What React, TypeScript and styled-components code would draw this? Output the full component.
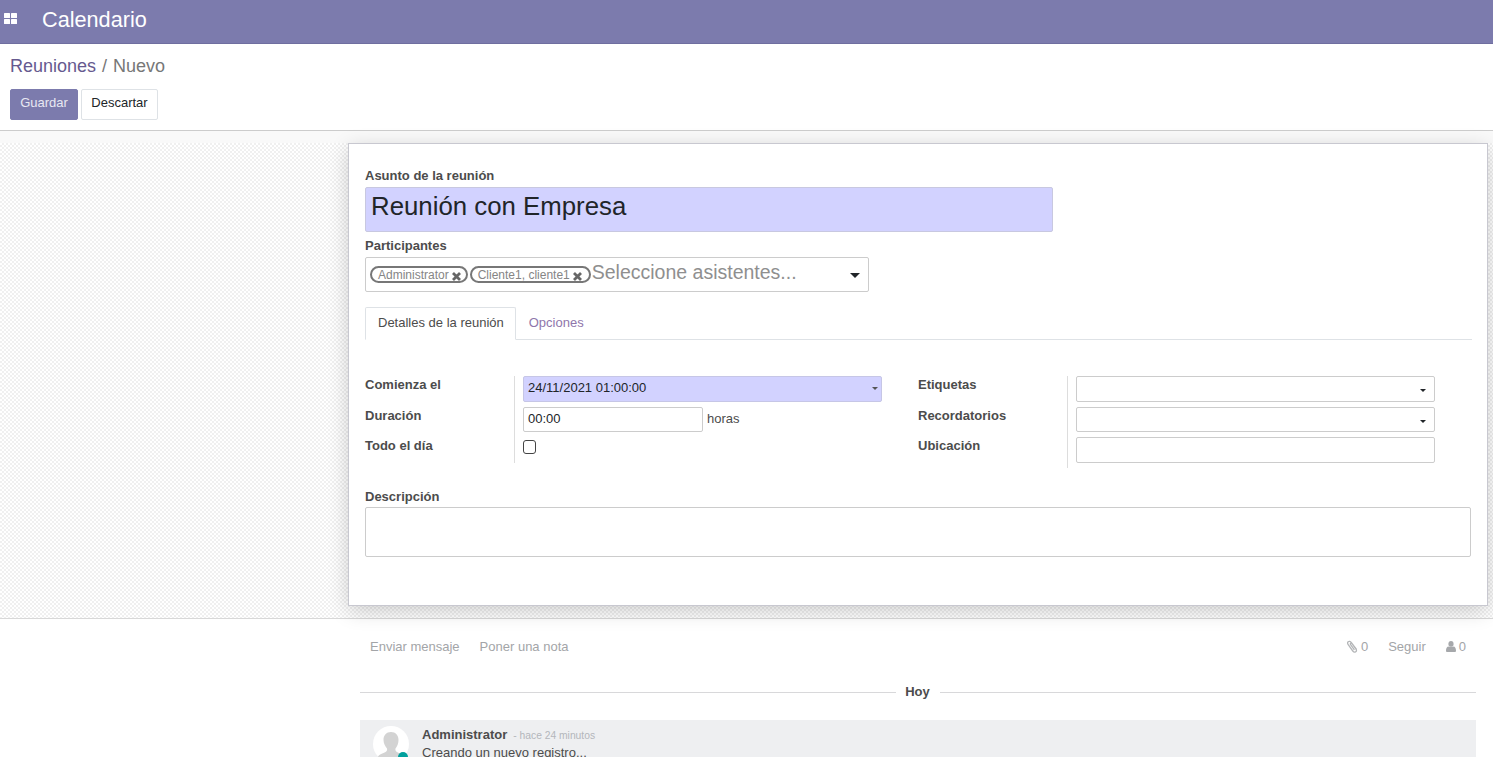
import React from "react";
import styled, { createGlobalStyle } from "styled-components";

const Global = createGlobalStyle`
  html, body { margin: 0; padding: 0; background: #fff; }
  body { font-family: "Liberation Sans", Arial, sans-serif; font-size: 13px; color: #4c4c4c; }
  * { box-sizing: border-box; }
`;

const Page = styled.div`
  width: 1493px; height: 757px; overflow: hidden; display: flex; flex-direction: column;
`;
const NavBar = styled.header`
  height: 44px; flex: none; background: #7c7bad; border-bottom: 1px solid #6f6e9f;
  display: flex; align-items: center; color: #fff; padding-left: 4px; padding-bottom: 4px;
`;
const AppsIcon = styled.svg`
  width: 13px; height: 11px; fill: #fff; margin-right: 25px; margin-top: -2px;
`;
const AppTitle = styled.span` font-size: 21.67px; line-height: 24px; `;

const ControlPanel = styled.section`
  height: 87px; flex: none; background: #fff; border-bottom: 1px solid #ccc;
  padding: 10px 10px 0; display: flex; flex-direction: column;
`;
const Crumbs = styled.div`
  font-size: 18px; line-height: 24px; color: #777; display: flex; gap: 6px;
`;
const CrumbLink = styled.a` color: #66598f; `;
const Buttons = styled.div` display: flex; gap: 3px; margin-top: 11px; `;
const Button = styled.button<{ $primary?: boolean; $w: number }>`
  width: ${(p) => p.$w}px; height: 31px; padding: 0 0 5px; font: 13px/1 "Liberation Sans", Arial, sans-serif; border-radius: 2px;
  background: ${(p) => (p.$primary ? "#7c7bad" : "#fff")};
  color: ${(p) => (p.$primary ? "#e8e8f2" : "#212529")};
  border: 1px solid ${(p) => (p.$primary ? "#7c7bad" : "#dee2e6")};
`;

const Sheet = styled.main`
  height: 488px; flex: none; padding: 12px 5px 13px 348px; border-bottom: 1px solid #d8d8d8;
  background-color: #fff;
  background-image:
    linear-gradient(#f9f9f9, #f9f9f9),
    repeating-conic-gradient(#f0f0f0 0 25%, #fff 0 50%);
  background-size: 100% 12px, 4px 4px;
  background-repeat: no-repeat, repeat;
`;
const Card = styled.div`
  height: 463px; background: #fff; border: 1px solid #c8c8d0;
  box-shadow: 0 5px 20px -1px rgba(0,0,0,.2);
  padding: 24px 16px 0;
`;
const FieldLabel = styled.label`
  display: block; font-weight: 700; font-size: 13px; line-height: 15px; color: #4c4c4c;
`;
const TitleInput = styled.input`
  display: block; width: 688px; height: 45px; margin-top: 4px; padding: 0 5px 6px;
  background: #d2d2ff; border: 1px solid #c8c8e0; border-radius: 2px;
  font: 25.8px "Liberation Sans", Arial, sans-serif; color: #212529; outline: none;
`;
const PeopleLabel = styled(FieldLabel)` margin-top: 6px; `;
const TagBox = styled.div`
  position: relative; width: 504px; height: 35px; margin-top: 4px; padding: 0 4px 4px;
  border: 1px solid #ccc; border-radius: 2px; display: flex; align-items: center; gap: 2px;
`;
const Tag = styled.span<{ $pr: number }>`
  display: inline-flex; align-items: center; height: 17px; padding: 1px ${(p) => p.$pr}px 0 6px; gap: 3px;
  border: 2px solid #777; border-radius: 9px; font-size: 12px; color: #858585; white-space: nowrap; margin-top: 4px;
`;
const TagClose = styled.svg`
  width: 9px; height: 9px; stroke: #666; stroke-width: 2.8; margin-top: 3px; flex: none;
`;
const Placeholder = styled.span` font-size: 19.5px; color: #8f8f8f; line-height: 24px; margin-left: -1px; margin-top: -2px; `;
const BigCaret = styled.i`
  position: absolute; right: 8px; top: 15px; width: 0; height: 0;
  border-left: 5px solid transparent; border-right: 5px solid transparent; border-top: 5px solid #212529;
`;
const Tabs = styled.nav`
  display: flex; margin-top: 15px; height: 33px; border-bottom: 1px solid #dee2e6; width: 1107px;
`;
const Tab = styled.a<{ $active?: boolean }>`
  height: 33px; display: flex; align-items: center; font-size: 13px;
  color: ${(p) => (p.$active ? "#4c4c4c" : "#8f76ab")};
  padding: 0 ${(p) => (p.$active ? "11px 2px 12px" : "12px 2px 13px")};
  ${(p) => p.$active && "border: 1px solid #dee2e6; border-bottom-color: #fff; border-radius: 2px 2px 0 0;"}
`;
const Columns = styled.div` display: flex; margin-top: 36px; `;
const FormGroup = styled.div<{ $w: number }>`
  display: grid; grid-template-columns: 149px auto; width: ${(p) => p.$w}px;
`;
const LabelCol = styled.div`
  display: flex; flex-direction: column;
`;
const RowLabel = styled(FieldLabel)<{ $h: number }>`
  height: ${(p) => p.$h}px; padding-top: 1px;
`;
const ValueCol = styled.div<{ $h: number }>`
  border-left: 1px solid #ddd; padding-left: 8px; height: ${(p) => p.$h}px;
  display: flex; flex-direction: column;
`;
const Control = styled.div<{ $w: number; $fill?: boolean; $top?: number; $h: number }>`
  position: relative; width: ${(p) => p.$w}px; height: ${(p) => p.$h}px; margin-top: ${(p) => p.$top ?? 0}px;
  border: 1px solid #ccc; border-radius: 2px; background: ${(p) => (p.$fill ? "#d2d2ff" : "#fff")};
  color: #212529; font-size: 13px; line-height: 21px; padding: 0 4px;
  ${(p) => p.$fill && "border-color: #c6c6e6;"}
`;
const SmallCaret = styled.i<{ $y: number; $c: string; $r: number }>`
  position: absolute; right: ${(p) => p.$r}px; top: ${(p) => p.$y}px; width: 0; height: 0;
  border-left: 3px solid transparent; border-right: 3px solid transparent; border-top: 3px solid ${(p) => p.$c};
`;
const DurationRow = styled.div` display: flex; align-items: center; gap: 4px; margin-top: 5px; `;
const Unit = styled.span` font-size: 13px; color: #4c4c4c; padding-bottom: 2px; `;
const CheckBox = styled.input`
  appearance: none; width: 13px; height: 14px; margin: 8px 0 0; border: 1px solid #444; border-radius: 3px; background: #fff;
`;
const DescLabel = styled(FieldLabel)` margin-top: 21px; `;
const DescBox = styled.textarea`
  display: block; width: 1106px; height: 50px; margin-top: 3px; border: 1px solid #ccc; border-radius: 2px; resize: none; outline: none;
`;

const Chatter = styled.section` flex: 1; padding: 0 17px 0 360px; overflow: hidden; `;
const ChatterTop = styled.div`
  display: flex; align-items: center; height: 57px; padding: 0 10px 3px; color: #a3a5a8; font-size: 13px;
`;
const ChatterAction = styled.span<{ $ml?: number }>`
  margin-left: ${(p) => p.$ml ?? 0}px; display: inline-flex; align-items: center; gap: 3px;
`;
const ClipIcon = styled.svg`
  width: 11px; height: 13px; fill: none; stroke: #b4b6b8; stroke-width: 1.3; margin-top: 1px;
`;
const PersonIcon = styled.svg`
  width: 10px; height: 11px; fill: #a6a8ab; margin-top: 1px;
`;
const Spacer = styled.div` flex: 1; `;
const DayRule = styled.div`
  display: flex; align-items: center; gap: 9px; margin-top: 8px; height: 16px; font-weight: 700; font-size: 13px; color: #4c4c4c;
  &::before, &::after { content: ""; flex: 1; height: 1px; background: #d8d8da; }
`;
const DayLabel = styled.span` margin: -2px 1px 0 0; `;
const Message = styled.article`
  display: flex; margin-top: 20px; height: 60px; background: #eeeff1; padding: 6px 0 0 13px; gap: 13px;
`;
const AvatarWrap = styled.div`
  position: relative; width: 36px; height: 36px; flex: none; border-radius: 50%; background: #fff;
`;
const AvatarArt = styled.svg` display: block; `;
const Dot = styled.span`
  position: absolute; right: 1px; bottom: 0; width: 10px; height: 10px; border-radius: 50%; background: #00a09d;
`;
const MsgHead = styled.div` font-size: 10.3px; color: #b3b6bb; line-height: 16px; margin-top: 1px; `;
const MsgName = styled.b` font-size: 13px; color: #4c4c4c; margin-right: 6px; `;
const MsgText = styled.div` font-size: 13px; color: #4c4c4c; line-height: 18px; margin-top: 0; `;

const Close = () => (
  <TagClose viewBox="0 0 9 9">
    <path d="M1 1l7 7M8 1l-7 7" />
  </TagClose>
);

export default function App() {
  return (
    <Page>
      <Global />
      <NavBar>
        <AppsIcon viewBox="0 0 13 11">
          <rect x="0" y="0" width="6" height="5" rx="0.5" />
          <rect x="7" y="0" width="6" height="5" rx="0.5" />
          <rect x="0" y="6" width="6" height="5" rx="0.5" />
          <rect x="7" y="6" width="6" height="5" rx="0.5" />
        </AppsIcon>
        <AppTitle>Calendario</AppTitle>
      </NavBar>
      <ControlPanel>
        <Crumbs>
          <CrumbLink>Reuniones</CrumbLink>
          <span>/</span>
          <span>Nuevo</span>
        </Crumbs>
        <Buttons>
          <Button $primary $w={68}>Guardar</Button>
          <Button $w={77}>Descartar</Button>
        </Buttons>
      </ControlPanel>
      <Sheet>
        <Card>
          <FieldLabel>Asunto de la reunión</FieldLabel>
          <TitleInput readOnly value="Reunión con Empresa" />
          <PeopleLabel>Participantes</PeopleLabel>
          <TagBox>
            <Tag $pr={5}>Administrator<Close /></Tag>
            <Tag $pr={7}>Cliente1, cliente1<Close /></Tag>
            <Placeholder>Seleccione asistentes...</Placeholder>
            <BigCaret />
          </TagBox>
          <Tabs>
            <Tab $active>Detalles de la reunión</Tab>
            <Tab>Opciones</Tab>
          </Tabs>
          <Columns>
            <FormGroup $w={553}>
              <LabelCol>
                <RowLabel $h={31}>Comienza el</RowLabel>
                <RowLabel $h={30}>Duración</RowLabel>
                <RowLabel $h={26}>Todo el día</RowLabel>
              </LabelCol>
              <ValueCol $h={87}>
                <Control $w={359} $h={26} $fill>
                  24/11/2021 01:00:00
                  <SmallCaret $y={10} $r={3} $c="#555" />
                </Control>
                <DurationRow>
                  <Control $w={180} $h={25}>00:00</Control>
                  <Unit>horas</Unit>
                </DurationRow>
                <CheckBox type="checkbox" />
              </ValueCol>
            </FormGroup>
            <FormGroup $w={520}>
              <LabelCol>
                <RowLabel $h={31}>Etiquetas</RowLabel>
                <RowLabel $h={30}>Recordatorios</RowLabel>
                <RowLabel $h={26}>Ubicación</RowLabel>
              </LabelCol>
              <ValueCol $h={92}>
                <Control $w={359} $h={26}>
                  <SmallCaret $y={12} $r={8} $c="#212529" />
                </Control>
                <Control $w={359} $h={25} $top={5}>
                  <SmallCaret $y={12} $r={8} $c="#212529" />
                </Control>
                <Control $w={359} $h={26} $top={5} />
              </ValueCol>
            </FormGroup>
          </Columns>
          <DescLabel>Descripción</DescLabel>
          <DescBox readOnly />
        </Card>
      </Sheet>
      <Chatter>
        <ChatterTop>
          <ChatterAction>Enviar mensaje</ChatterAction>
          <ChatterAction $ml={20}>Poner una nota</ChatterAction>
          <Spacer />
          <ChatterAction>
            <ClipIcon viewBox="0 0 11 13">
              <path d="M9.500 9.500 4.200 2.300C3.400 1.200 2 1 1.200 1.700.4 2.400.4 3.600 1.200 4.700l4.600 6.300c.8 1.100 2 1.400 2.900.8.900-.6 1-1.700.3-2.700L5 3.700c-.4-.6-1-.7-1.400-.4-.4.300-.4.900 0 1.400l3.800 5.200" />
            </ClipIcon>
            0
          </ChatterAction>
          <ChatterAction $ml={20}>Seguir</ChatterAction>
          <ChatterAction $ml={20}>
            <PersonIcon viewBox="0 0 10 11">
              <ellipse cx="5" cy="2.900" rx="2.600" ry="2.900" />
              <path d="M0 9.800C0 7.200 1 5.400 2.500 5.400c.8.800 4.200.8 5 0C9 5.400 10 7.200 10 9.800 10 10.600 9.500 11 8.800 11H1.200C.5 11 0 10.600 0 9.800z" />
            </PersonIcon>
            0
          </ChatterAction>
        </ChatterTop>
        <DayRule><DayLabel>Hoy</DayLabel></DayRule>
        <Message>
          <AvatarWrap>
            <AvatarArt width="36" height="36" viewBox="0 0 36 36">
              <path d="M18 6c4.600 0 7.500 3.400 7.500 8 0 3.500-1.300 6.500-3 8.500-.5 2 .5 3.500 3.500 4.500 3 1 6 2.500 6 6v3.500H4.500V33c0-3.500 3-5 6-6s4-2.500 3.500-4.500c-1.700-2-3.500-5-3.500-8.500 0-4.600 2.900-8 7.500-8z" fill="#d3d3d3" />
            </AvatarArt>
            <Dot />
          </AvatarWrap>
          <div>
            <MsgHead><MsgName>Administrator</MsgName>- hace 24 minutos</MsgHead>
            <MsgText>Creando un nuevo registro...</MsgText>
          </div>
        </Message>
      </Chatter>
    </Page>
  );
}
